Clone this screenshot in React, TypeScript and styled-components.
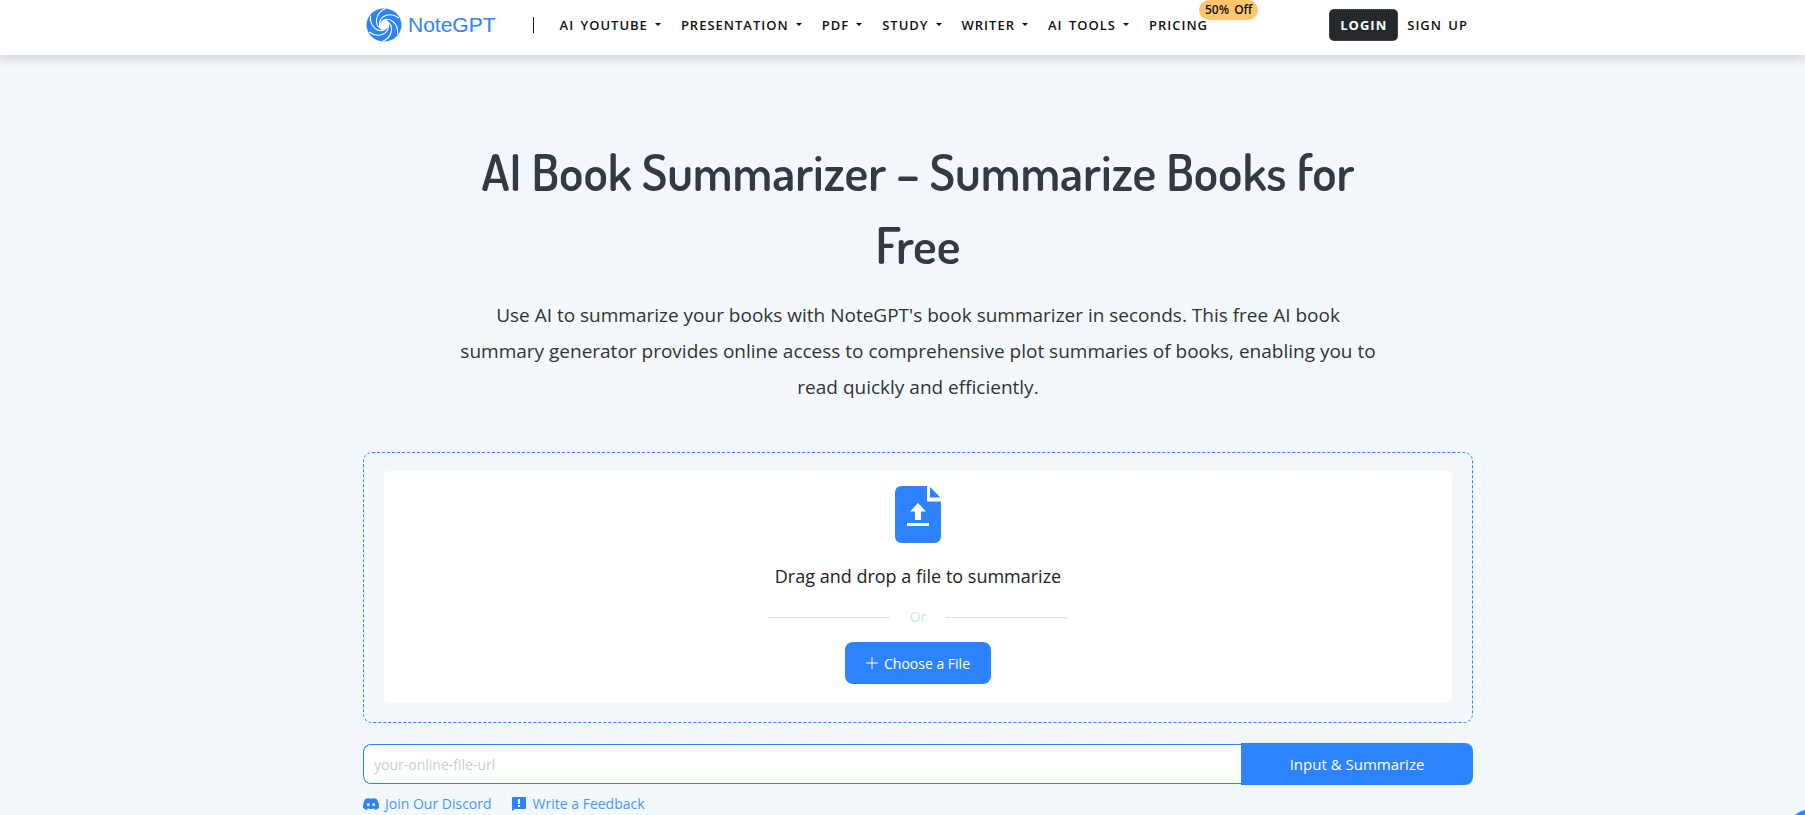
import React from "react";
import styled, { createGlobalStyle } from "styled-components";

const BLUE = "#2d83ff";
const GUTTER = "31px";

const Global = createGlobalStyle`
  *, *::before, *::after { box-sizing: border-box; }
  html, body { margin: 0; min-height: 100%; background: #f2f8fb; }
  body {
    font-family: "Open Sans", "Noto Sans", sans-serif;
    color: #333;
    overflow: hidden;
  }
  button, input { font-family: inherit; }
  a { text-decoration: none; color: inherit; }
`;

const Header = styled.header`
  position: relative;
  background: #fff;
  padding-left: ${GUTTER};
  box-shadow: 0 3px 12px rgba(0, 0, 0, 0.18);
`;

const Container = styled.div`
  width: 100%;
  max-width: 1110px;
  margin: 0 auto;
`;

const Bar = styled(Container)`
  display: flex;
  align-items: center;
  height: 55px;
  padding: 0 5px 6px 3px;
`;

const Brand = styled.a`
  display: flex;
  align-items: center;
  gap: 6px;
  color: ${BLUE};
  font-family: "Liberation Sans", Arial, sans-serif;
  font-size: 21px;
  line-height: 24px;
`;

const Divider = styled.span`
  width: 1px;
  height: 16px;
  margin: 0 26px 0 37px;
  background: #111;
`;

const Nav = styled.nav`
  display: flex;
  align-items: center;
  gap: 20px;
  flex: 1;
`;

const NavButton = styled.button`
  display: flex;
  align-items: center;
  gap: 7px;
  border: 0;
  padding: 0;
  background: none;
  color: #111;
  font-size: 13px;
  font-weight: 600;
  line-height: 20px;
  letter-spacing: 1px;
  word-spacing: 2px;
  white-space: nowrap;

  &::after {
    content: "";
    border: 3px solid transparent;
    border-top-color: #111;
    border-bottom: 0;
  }
`;

const NavLink = styled.a`
  position: relative;
  color: #111;
  font-size: 13px;
  font-weight: 600;
  line-height: 20px;
  letter-spacing: 1px;
  word-spacing: 2px;
  white-space: nowrap;
`;

const Badge = styled.span`
  position: absolute;
  left: 50px;
  bottom: 15px;
  padding: 0 6px;
  border-radius: 10px;
  background: #fdc56c;
  font-size: 12px;
  line-height: 20px;
  letter-spacing: 0;
`;

const Account = styled.div`
  display: flex;
  align-items: center;
  gap: 9px;
`;

const Login = styled.button`
  height: 32px;
  padding: 0 10px;
  border: 1px dotted #596066;
  border-radius: 5px;
  background: #24292e;
  color: #fff;
  font-size: 13px;
  font-weight: 700;
  letter-spacing: 1px;
`;

const Main = styled.main`
  padding-left: ${GUTTER};
`;

const Hero = styled.section`
  max-width: 920px;
  margin: 0 auto;
  padding-top: 80px;
  text-align: center;
`;

const Title = styled.h1`
  margin: 0;
  color: #343a43;
  font-family: Dosis, Lato, sans-serif;
  font-size: 50px;
  font-weight: 600;
  line-height: 73px;
`;

const Lead = styled.p`
  margin: 16px 0 0;
  color: #333;
  font-size: 19px;
  line-height: 36px;
`;

const DropZone = styled.section`
  margin-top: 47px;
  padding: 18px 20px 19px;
  border: 1px dashed ${BLUE};
  border-radius: 9px;
`;

const DropPanel = styled.div`
  display: flex;
  flex-direction: column;
  align-items: center;
  padding: 15px 0 19px;
  border-radius: 5px;
  background: #fff;
`;

const DropText = styled.p`
  margin: 19px 0 0;
  color: #222;
  font-size: 18px;
  line-height: 28px;
`;

const OrRow = styled.div`
  display: flex;
  align-items: center;
  gap: 20px;
  width: 300px;
  margin: 17px 0 15px;
  color: #bfe4fb;
  font-size: 14px;
  line-height: 20px;

  &::before, &::after {
    content: "";
    flex: 1;
    height: 1px;
    background: #dcdcdc;
  }
`;

const ChooseFile = styled.button`
  display: flex;
  align-items: center;
  justify-content: center;
  gap: 6px;
  width: 146px;
  height: 42px;
  border: 0;
  border-radius: 8px;
  background: ${BLUE};
  color: #fff;
  font-size: 14px;
  font-weight: 500;
`;

const UrlForm = styled.form`
  display: flex;
  align-items: center;
  margin-top: 20px;
`;

const UrlInput = styled.input`
  flex: 1;
  min-width: 0;
  height: 40px;
  padding: 0 10px;
  border: 1px solid ${BLUE};
  border-right: 0;
  border-radius: 8px 0 0 8px;
  background: #fff;
  font-size: 14px;
  outline: 0;

  &::placeholder { color: #c6cfd3; opacity: 1; }
`;

const Submit = styled.button`
  width: 232px;
  height: 42px;
  border: 0;
  border-radius: 0 8px 8px 0;
  background: ${BLUE};
  color: #fff;
  font-size: 15px;
  font-weight: 500;
`;

const Links = styled.div`
  display: flex;
  gap: 19px;
  margin-top: 9px;
`;

const IconLink = styled.a`
  display: flex;
  align-items: center;
  gap: 6px;
  color: #4a97fb;
  font-size: 14px;
  line-height: 20px;

  svg { fill: ${BLUE}; }
`;

const FloatingButton = styled.button`
  position: fixed;
  right: -31px;
  bottom: -44px;
  width: 50px;
  height: 50px;
  border: 0;
  border-radius: 50%;
  background: ${BLUE};
`;

const angles = [0, 60, 120, 180, 240, 300];

const Logo = () => (
  <svg width="36" height="34" viewBox="0 0 36 34" aria-hidden="true">
    <ellipse cx="18" cy="17" rx="17.5" ry="16.5" fill={BLUE} />
    {angles.map((a) => (
      <path
        key={a}
        d="M13.500 17 C13 7.500 24 3.500 33 10"
        fill="none"
        stroke="#fff"
        strokeWidth="1.1"
        transform={`rotate(${a} 18 17)`}
      />
    ))}
    <ellipse cx="18" cy="17" rx="5.500" ry="4.400" fill="#fff" transform="rotate(-40 18 17)" />
  </svg>
);

const UploadIcon = () => (
  <svg width="46" height="57" viewBox="0 0 46 57" aria-hidden="true">
    <path d="M7 0H32V15.500H46V50Q46 57 39 57H7Q0 57 0 50V7Q0 0 7 0Z" fill={BLUE} />
    <path d="M35 1L45.500 11.500H35Z" fill={BLUE} />
    <path d="M23 17L31 25.500H26V34H20V25.500H15Z" fill="#fff" />
    <rect x="12" y="37" width="22" height="3" fill="#fff" />
  </svg>
);

const PlusIcon = () => (
  <svg width="12" height="12" viewBox="0 0 12 12" aria-hidden="true">
    <path d="M6 0V12M0 6H12" stroke="#fff" strokeWidth="1" />
  </svg>
);

const DiscordIcon = () => (
  <svg width="16" height="16" viewBox="0 0 16 16" aria-hidden="true">
    <path d="M13.545 2.907a13.200 13.200 0 0 0-3.257-1.011.05.05 0 0 0-.052.025c-.141.250-.297.577-.406.833a12.200 12.200 0 0 0-3.658 0 8 8 0 0 0-.412-.833.050.050 0 0 0-.052-.025c-1.125.194-2.220.534-3.257 1.011C.356 6.024-.213 9.047.066 12.032c.001.014.010.028.021.037a13.300 13.300 0 0 0 3.995 2.020q.463-.630.818-1.329c.010-.020 0-.060-.021-.065a9 9 0 0 1-1.248-.595l.248-.195a9.500 9.500 0 0 0 8.242 0l.248.195q-.597.350-1.249.595.328.720.819 1.394a13.200 13.200 0 0 0 4.001-2.020c.334-3.451-.559-6.449-2.366-9.106M5.347 10.200c-.789 0-1.438-.724-1.438-1.612s.637-1.613 1.438-1.613c.807 0 1.450.730 1.438 1.613 0 .888-.637 1.612-1.438 1.612m5.316 0c-.788 0-1.438-.724-1.438-1.612s.637-1.613 1.438-1.613c.807 0 1.451.730 1.438 1.613 0 .888-.631 1.612-1.438 1.612" />
  </svg>
);

const FeedbackIcon = () => (
  <svg width="16" height="16" viewBox="0 0 16 16" aria-hidden="true">
    <path d="M2 1H14Q15 1 15 2V12Q15 13 14 13H4L1 15V2Q1 1 2 1Z" />
    <path d="M7 3H9V8H7ZM7 9H9V11H7Z" style={{ fill: "#fff" }} />
  </svg>
);

const menus = ["AI YOUTUBE", "PRESENTATION", "PDF", "STUDY", "WRITER", "AI TOOLS"];

export default function App() {
  return (
    <>
      <Global />
      <Header>
        <Bar>
          <Brand href="#"><Logo />NoteGPT</Brand>
          <Divider />
          <Nav>
            {menus.map((m) => <NavButton key={m} type="button">{m}</NavButton>)}
            <NavLink href="#pricing">PRICING<Badge>50% Off</Badge></NavLink>
          </Nav>
          <Account>
            <Login type="button">LOGIN</Login>
            <NavLink href="#signup">SIGN UP</NavLink>
          </Account>
        </Bar>
      </Header>
      <Main>
        <Hero>
          <Title>AI Book Summarizer – Summarize Books for Free</Title>
          <Lead>
            Use AI to summarize your books with NoteGPT's book summarizer in seconds. This free AI book
            summary generator provides online access to comprehensive plot summaries of books, enabling
            you to read quickly and efficiently.
          </Lead>
        </Hero>
        <Container>
          <DropZone>
            <DropPanel>
              <UploadIcon />
              <DropText>Drag and drop a file to summarize</DropText>
              <OrRow>Or</OrRow>
              <ChooseFile type="button"><PlusIcon />Choose a File</ChooseFile>
            </DropPanel>
          </DropZone>
          <UrlForm onSubmit={(e) => e.preventDefault()}>
            <UrlInput type="url" aria-label="Online file URL" placeholder="your-online-file-url" />
            <Submit type="submit">Input &amp; Summarize</Submit>
          </UrlForm>
          <Links>
            <IconLink href="#discord"><DiscordIcon />Join Our Discord</IconLink>
            <IconLink href="#feedback"><FeedbackIcon />Write a Feedback</IconLink>
          </Links>
        </Container>
      </Main>
      <FloatingButton type="button" aria-label="Open chat" />
    </>
  );
}
